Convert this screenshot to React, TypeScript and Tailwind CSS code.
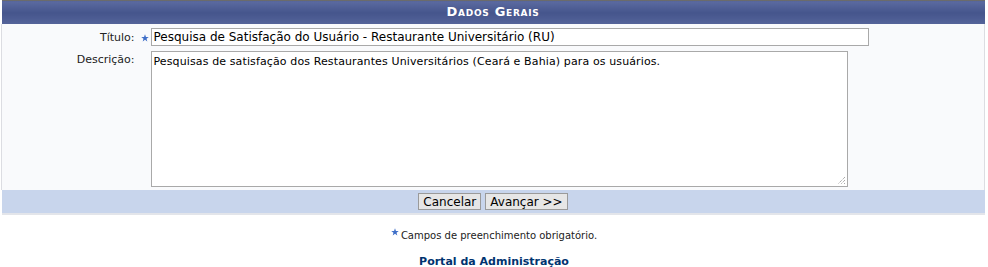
const font = { fontFamily: '"DejaVu Sans", Verdana, sans-serif' };

function Star({ className }: { className?: string }) {
	return (
		<svg className={className} viewBox="0 0 10 10" width="8" height="8" aria-hidden>
			<path
				d="M5 0.3 L6.2 3.6 L9.7 3.7 L6.9 5.8 L7.9 9.3 L5 7.2 L2.1 9.3 L3.1 5.8 L0.3 3.7 L3.8 3.6 Z"
				fill="#3f6fc8"
			/>
		</svg>
	);
}

export default function App() {
	return (
		<div className="w-[988px] h-[267px] bg-white text-black" style={font}>
			<div className="pt-0 pl-[1px] w-[985px]">
				<table className="w-full border-collapse">
					<thead>
						<tr>
							<th
								colSpan={2}
								className="h-[23px] border-t border-[#6b6b6b] bg-gradient-to-b from-[#5b6aa0] via-[#45558c] to-[#55649a] text-white text-[13px] leading-[16px] font-bold tracking-[0.7px] [font-variant:small-caps]"
							>
								Dados Gerais
							</th>
						</tr>
					</thead>
					<tbody className="bg-[#f9fafc] border-x border-[#dcdde2]">
						<tr>
							<td className="w-[149px] pt-[4px] pr-[2px] text-right align-top text-[11px] text-[#222]">
								<span className="inline-flex items-center gap-[6px] pt-[2px]">
									Título:
									<Star />
								</span>
							</td>
							<td className="pt-[4px]">
								<div className="w-[718px] h-[18px] border border-[#a9a9a9] bg-white px-[2px] text-[12px] leading-[16px]">
									Pesquisa de Satisfação do Usuário - Restaurante Universitário (RU)
								</div>
							</td>
						</tr>
						<tr>
							<td className="pt-[6px] pr-[16px] text-right align-top text-[11px] text-[#222]">
								Descrição:
							</td>
							<td className="pt-[5px] pb-[3px]">
								<div className="relative w-[697px] h-[136px] border border-[#a9a9a9] bg-white px-[2px] pt-[3px] text-[11px] tracking-[0.12px] leading-[14px]">
									Pesquisas de satisfação dos Restaurantes Universitários (Ceará e Bahia) para os usuários.
									<svg
										className="absolute right-[1px] bottom-[1px]"
										width="9"
										height="9"
										viewBox="0 0 9 9"
									>
										<path d="M8 1 L1 8 M8 4 L4 8 M8 7 L7 8" stroke="#888" strokeWidth="1" strokeDasharray="1 1" />
									</svg>
								</div>
							</td>
						</tr>
					</tbody>
					<tfoot>
						<tr>
							<td colSpan={2} className="h-[24px] bg-[#c8d5ec] border-b-2 border-[#e3e5ea] text-center">
								<div className="flex justify-center gap-[4px]">
									<button className="h-[17px] px-[4px] border border-[#9a9a9a] bg-[#e6e6e6] text-[12px] leading-[14px]">
										Cancelar
									</button>
									<button className="h-[17px] px-[4px] border border-[#9a9a9a] bg-[#e6e6e6] text-[12px] leading-[14px]">
										Avançar &gt;&gt;
									</button>
								</div>
							</td>
						</tr>
					</tfoot>
				</table>
			</div>
			<div className="mt-[14px] flex justify-center items-start gap-[2px] text-[10px] leading-[13px] text-[#222]">
				<Star className="mt-[-1px]" />
				<span>Campos de preenchimento obrigatório.</span>
			</div>
			<div className="mt-[13px] text-center text-[11px] leading-[14px] font-bold text-[#00336f]">
				Portal da Administração
			</div>
		</div>
	);
}
